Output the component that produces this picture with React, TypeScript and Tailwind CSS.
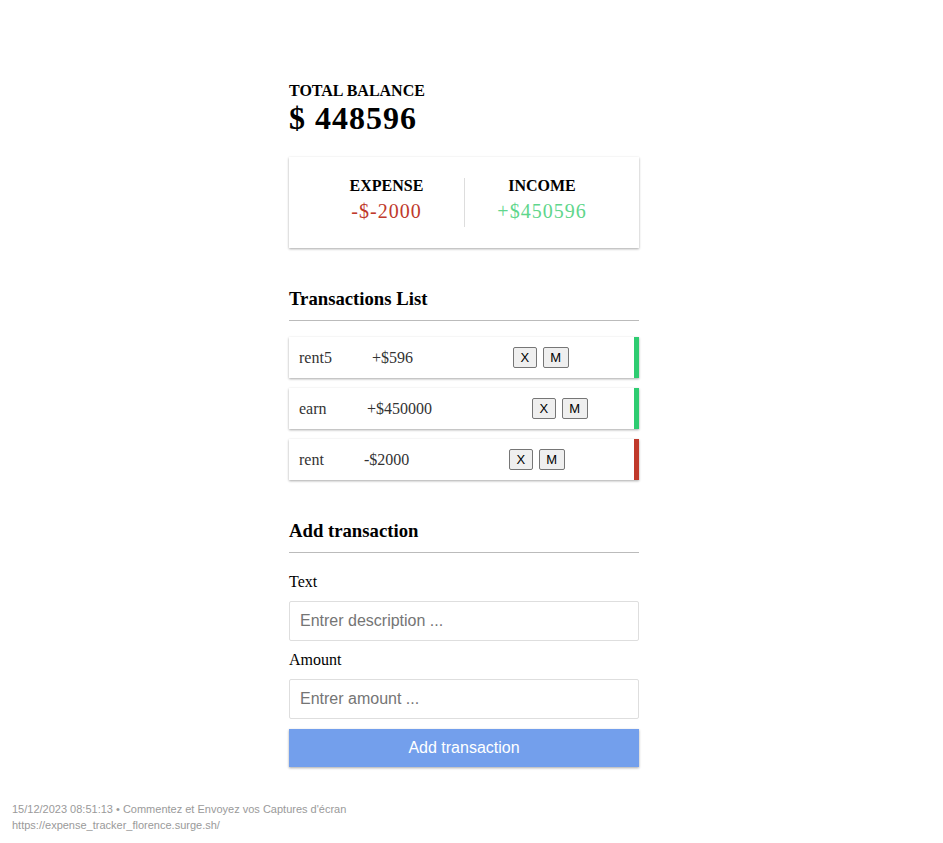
import React, { useState } from 'react';

type Tx = {
  id: number;
  text: string;
  amount: number;
  nameW: string;
  amountW: string;
};

const initial: Tx[] = [
  { id: 1, text: 'rent5', amount: 596, nameW: 'w-[73px]', amountW: 'w-[141px]' },
  { id: 2, text: 'earn', amount: 450000, nameW: 'w-[68px]', amountW: 'w-[165px]' },
  { id: 3, text: 'rent', amount: -2000, nameW: 'w-[65px]', amountW: 'w-[145px]' },
];

const serif = "font-['Liberation_Serif','Times_New_Roman',serif]";
const sans = "font-['Liberation_Sans',Arial,sans-serif]";

const App: React.FC = () => {
  const [txs] = useState<Tx[]>(initial);
  const [text, setText] = useState('');
  const [amount, setAmount] = useState('');

  const total = txs.reduce((s, t) => s + t.amount, 0);
  const income = txs.filter(t => t.amount > 0).reduce((s, t) => s + t.amount, 0);
  const expense = txs.filter(t => t.amount < 0).reduce((s, t) => s + t.amount, 0);

  return (
    <div className={`min-h-screen bg-white text-black ${serif}`}>
      <div className="pl-[289px] pt-[82px]">
        <div className="w-[350px]">
          {/* Balance */}
          <h4 className="text-[16px] leading-[18px] font-bold uppercase">Total Balance</h4>
          <h1 className="mt-[2px] text-[32px] leading-[32px] font-bold tracking-[1px]">$ {total}</h1>

          {/* Income / expense card */}
          <div className="mt-[23px] bg-white pt-[21px] px-[20px] pb-[21px] grid grid-cols-2 shadow-[0_1px_3px_rgba(0,0,0,0.12),0_1px_2px_rgba(0,0,0,0.24)]">
            <div className="flex flex-col items-center">
              <h4 className="text-[16px] leading-[16px] font-bold uppercase">Expense</h4>
              <p className="mt-[1px] text-[20px] leading-[32px] tracking-[1px] text-[#c0392b]">-${expense}</p>
            </div>
            <div className="flex flex-col items-center border-l border-[#dddddd]">
              <h4 className="text-[16px] leading-[16px] font-bold uppercase">Income</h4>
              <p className="mt-[1px] text-[20px] leading-[32px] tracking-[1px] text-[#5fd68c]">+${income}</p>
            </div>
          </div>

          {/* List */}
          <h3 className="mt-[40px] text-[18.72px] leading-[22px] font-bold">Transactions List</h3>
          <div className="mt-[10px] h-px bg-[#bbbbbb]" />
          <ul className="mt-[16px] flex flex-col gap-[10px]">
            {txs.map(t => (
              <li
                key={t.id}
                className={`h-[41px] bg-white flex items-center pl-[10px] text-[16px] text-[#333333] border-r-[5px] shadow-[0_1px_3px_rgba(0,0,0,0.12),0_1px_2px_rgba(0,0,0,0.24)] ${t.amount < 0 ? 'border-[#c0392b]' : 'border-[#2ecc71]'}`}
              >
                <span className={t.nameW}>{t.text}</span>
                <span className={t.amountW}>{t.amount < 0 ? '-' : '+'}${Math.abs(t.amount)}</span>
                <span className={`flex gap-[6px] ${sans}`}>
                  <button className="h-[21px] px-[6.5px] text-[13px] leading-[19px] text-black bg-[#efefef] border border-[#767676] rounded-[2px]">X</button>
                  <button className="h-[21px] px-[6.5px] text-[13px] leading-[19px] text-black bg-[#efefef] border border-[#767676] rounded-[2px]">M</button>
                </span>
              </li>
            ))}
          </ul>

          {/* Form */}
          <h3 className="mt-[40px] text-[18.72px] leading-[22px] font-bold">Add transaction</h3>
          <div className="mt-[10px] h-px bg-[#bbbbbb]" />
          <form onSubmit={e => e.preventDefault()}>
            <label className="block mt-[19px] text-[16px] leading-[20px]">Text</label>
            <input
              value={text}
              onChange={e => setText(e.target.value)}
              placeholder="Entrer description ..."
              className={`mt-[9px] block w-full h-[40px] px-[10px] border border-[#dedede] rounded-[2px] text-[16px] placeholder:text-[#757575] outline-none ${sans}`}
            />
            <label className="block mt-[9px] text-[16px] leading-[20px]">Amount</label>
            <input
              value={amount}
              onChange={e => setAmount(e.target.value)}
              placeholder="Entrer amount ..."
              className={`mt-[9px] block w-full h-[40px] px-[10px] border border-[#dedede] rounded-[2px] text-[16px] placeholder:text-[#757575] outline-none ${sans}`}
            />
            <button className={`mt-[10px] block w-full h-[38px] bg-[#739fec] text-white text-[16px] shadow-[0_1px_3px_rgba(0,0,0,0.12),0_1px_2px_rgba(0,0,0,0.24)] ${sans}`}>
              Add transaction
            </button>
          </form>
        </div>
      </div>

      {/* Capture footer */}
      <div className={`mt-[34px] pl-[12px] text-[11px] leading-[16px] text-[#9a9a9a] ${sans}`}>
        <div>15/12/2023 08:51:13 • Commentez et Envoyez vos Captures d'écran</div>
        <div>https://expense_tracker_florence.surge.sh/</div>
      </div>
    </div>
  );
};

export default App;
